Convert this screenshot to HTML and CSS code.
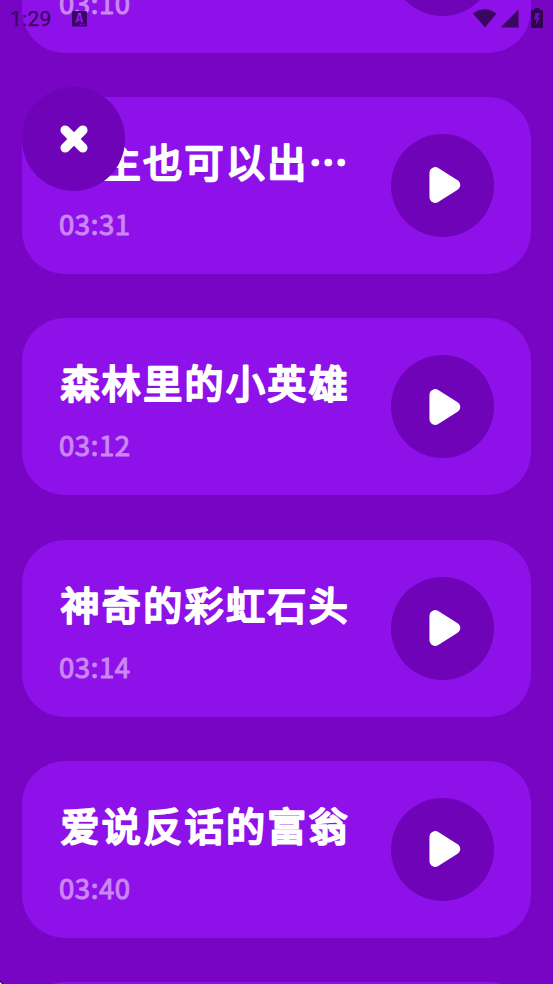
FILE: index.html
```
<!DOCTYPE html>
<html lang="zh-CN">
<head>
<meta charset="utf-8">
<meta name="viewport" content="width=device-width, initial-scale=1">
<title>故事</title>
<link rel="stylesheet" href="styles.css">
</head>
<body>
<svg class="symbols" aria-hidden="true">
  <symbol id="play" viewBox="0 0 32 38"><path d="M6.200 6.800v24.400L25.500 19Z" fill="#fff" stroke="#fff" stroke-width="11.500" stroke-linejoin="round"/></symbol>
</svg>
<div class="screen">
  <main class="list">
    <article class="card">
      <div class="info"><div class="title"></div><p class="time">03:10</p></div>
      <button class="play"><svg class="play-icon"><use href="#play"/></svg></button>
    </article>
    <article class="card">
      <div class="info"><svg class="title"><text x="1.400" y="43">公主也可以出…</text></svg><p class="time">03:31</p></div>
      <button class="play"><svg class="play-icon"><use href="#play"/></svg></button>
    </article>
    <article class="card">
      <div class="info"><svg class="title"><text x="1.400" y="43">森林里的小英雄</text></svg><p class="time">03:12</p></div>
      <button class="play"><svg class="play-icon"><use href="#play"/></svg></button>
    </article>
    <article class="card">
      <div class="info"><svg class="title"><text x="1.400" y="43">神奇的彩虹石头</text></svg><p class="time">03:14</p></div>
      <button class="play"><svg class="play-icon"><use href="#play"/></svg></button>
    </article>
    <article class="card">
      <div class="info"><svg class="title"><text x="1.400" y="43">爱说反话的富翁</text></svg><p class="time">03:40</p></div>
      <button class="play"><svg class="play-icon"><use href="#play"/></svg></button>
    </article>
    <article class="card"></article>
  </main>
  <header class="status">
    <span class="clock">1:29</span>
    <svg class="app" viewBox="0 0 15 16"><path fill-rule="evenodd" d="M1.500 0h12A1.500 1.500 0 0 1 15 1.500v12.500a1.500 1.500 0 0 1-1.500 1.500h-12A1.500 1.500 0 0 1 0 14v-12.500A1.500 1.500 0 0 1 1.500 0ZM6.100 2.500 3.300 11.500h2.200l.5-1.700h2.800L9.300 11.500h2.200L8.700 2.500ZM7.400 4.900 8.300 8H6.500ZM8 13v1h1v-1Zm2 0v1h1v-1Zm2 0v1h1v-1Z"/></svg>
    <span class="spacer"></span>
    <svg class="wifi" viewBox="0 0 24 19"><path d="M0 4.500Q11.700-4 23.500 4.500L12 18.500Z"/></svg>
    <svg class="signal" viewBox="0 0 18 19"><path d="M17.500.5V18.500H.5V17.500Z"/></svg>
    <svg class="battery" viewBox="0 0 12 20"><path fill-rule="evenodd" d="M3.500 0h5v2H10.500Q12 2 12 3.500V18.500Q12 20 10.500 20H1.500Q0 20 0 18.500V3.500Q0 2 1.500 2h2ZM4.300 5 3.200 11.500H5.500L4.500 17.500 9.300 9.500H7L9 5Z"/></svg>
  </header>
  <button class="close" aria-label="关闭"><svg class="close-icon" viewBox="0 0 28 28"><path d="M5.200 5.200 22.800 22.800M22.800 5.200 5.200 22.800" stroke="#fff" stroke-width="9.500" stroke-linecap="round"/></svg></button>
  <svg class="corner" viewBox="0 0 4 4"><path d="M0 0Q1 3 4 4H0Z" fill="#000"/><path d="M0 2 2 4H0Z" fill="#fff"/></svg>
</div>
</body>
</html>
```
FILE: styles.css
```
* { box-sizing: border-box; }
body { margin: 0; background: #7805c4; }
.symbols { position: absolute; width: 0; height: 0; }
.screen { position: relative; width: 553px; height: 984px; overflow: hidden; font-family: "Noto Sans CJK SC", sans-serif; }
.list { display: flex; flex-direction: column; gap: 44.130px; padding: 0 22px; margin-top: -124.330px; }
.card { flex: none; display: flex; justify-content: space-between; height: 177.200px; padding: 37px; border-radius: 43px; background: #8f11ea; }
.title { display: block; width: 296px; height: 60px; overflow: visible; fill: #fff; stroke: #fff; stroke-width: 2.400px; stroke-linejoin: round; font-size: 39px; font-weight: 400; letter-spacing: 2.380px; }
.time { margin: 8.900px 0 0; font-size: 27.500px; line-height: 40px; font-weight: 400; letter-spacing: .6px; color: #ca86f5; -webkit-text-stroke: 1px #ca86f5; }
.play { display: flex; align-items: center; justify-content: center; flex: none; width: 103px; height: 103px; padding: 0 0 0 4px; border: 0; border-radius: 50%; background: #6e03b8; }
.play-icon { width: 32px; height: 38px; }
.status { position: absolute; inset: 0 0 auto; display: flex; align-items: flex-start; height: 38px; padding: 0 10px; fill: #3b0662; color: #3b0662; }
.clock { width: 62px; padding-top: 7px; font: 400 21px/25px Roboto, sans-serif; letter-spacing: .3px; -webkit-text-stroke: .3px #3b0662; }
.app { width: 15px; height: 16px; margin-top: 11px; }
.spacer { flex: 1; }
.wifi { width: 24px; height: 19px; margin-top: 9px; }
.signal { width: 18px; height: 19px; margin: 9px 12px 0 4px; }
.battery { width: 12px; height: 20px; margin: 8px 0 0; fill: #2e034e; }
.close { position: absolute; left: 22px; top: 87px; display: flex; align-items: center; justify-content: center; width: 103.300px; height: 103.500px; padding: 0; border: 0; border-radius: 50%; background: #6e03b8; }
.close-icon { width: 28px; height: 28px; }
.corner { position: absolute; left: 0; bottom: 0; width: 4px; height: 4px; }
```
